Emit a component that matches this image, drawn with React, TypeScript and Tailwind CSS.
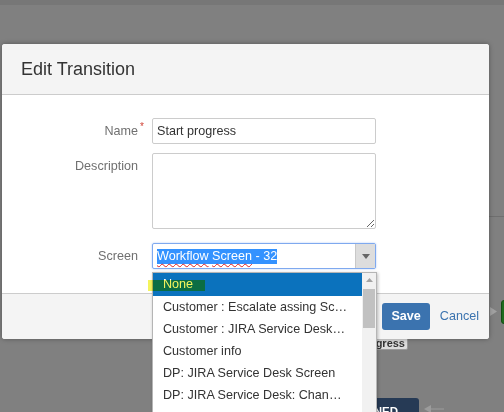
import { FC } from 'react';

const options = [
    'Customer : Escalate assing Screen',
    'Customer : JIRA Service Desk Screen',
    'Customer info',
    'DP: JIRA Service Desk Screen',
    'DP: JIRA Service Desk: Change Management Screen',
    'DP: JIRA Service Desk: Incident Screen',
];

const Label: FC<{ text: string; required?: boolean }> = ({ text, required }) => (
    <div className="relative text-right leading-[26px] text-[#707070]">
        {text}
        {required && <span className="absolute -right-[6px] -top-[4px] text-[10px] text-[#d04437]">*</span>}
    </div>
);

const App: FC = () => {
    return (
        <div className="relative h-[412px] w-[504px] overflow-hidden bg-[#808080] font-['Liberation_Sans',Arial,sans-serif] text-[12.6px] text-[#333]">
            <div className="h-[5px] bg-[#777777]" />

            {/* workflow canvas behind the dialog */}
            <div className="absolute left-[480px] top-[216px] h-px w-[24px] bg-[#6f6f6f]" />
            <svg className="absolute left-[490px] top-[307px]" width="8" height="9" viewBox="0 0 8 9">
                <path d="M0 0 L7 4.5 L0 9 Z" fill="#a2a2a2" />
            </svg>
            <div className="absolute left-[501px] top-[300px] h-[24px] w-[12px] rounded-[3px] border border-[#134d13] bg-[#1e6b1e]" />
            <div className="absolute right-[96px] top-[336px] flex h-[14px] items-center rounded-[2px] border border-[#9a9a9a] bg-[#dcdcdc] px-[2px] text-[11px] font-bold leading-none text-[#333]">
                Start progress
            </div>
            <div className="absolute right-[85px] top-[398px] h-[24px] rounded-[3px] bg-[#263a55] pl-[20px] pr-[21px] pt-[8px] text-[11.5px] font-bold leading-none text-white">
                ASSIGNED
            </div>
            <svg className="absolute left-[424px] top-[405px]" width="20" height="8" viewBox="0 0 20 8">
                <path d="M0 4 L7 0 L7 8 Z" fill="#9c9c9c" />
                <path d="M7 4 H20" stroke="#9c9c9c" strokeWidth="1" />
            </svg>

            {/* dialog */}
            <div className="absolute left-[2px] top-[44px] flex w-[487px] flex-col overflow-hidden rounded-[3px] bg-white shadow-[0_0_5px_rgba(0,0,0,0.35)]">
                <div className="flex h-[51px] items-center border-b border-[#cccccc] bg-[#f4f4f4] px-[19px]">
                    <h2 className="text-[18px] font-normal text-[#333]">Edit Transition</h2>
                </div>

                <div className="h-[198px] pt-[23px]">
                    <div className="grid grid-cols-[136px_224px] gap-x-[14px]">
                        <Label text="Name" required />
                        <input
                            className="h-[26px] rounded-[2px] border border-[#cccccc] px-[4px] text-[12.6px] text-[#333] outline-none"
                            defaultValue="Start progress"
                        />

                        <div className="mt-[9px]">
                            <Label text="Description" />
                        </div>
                        <textarea className="mt-[9px] h-[76px] rounded-[2px] border border-[#cccccc] px-[4px] text-[12.6px] outline-none" />

                        <div className="mt-[14px]">
                            <Label text="Screen" />
                        </div>
                        <div className="mt-[14px] flex h-[26px] items-stretch rounded-[2px] border border-[#7fa9ef] shadow-[0_0_2px_#a9c7f7]">
                            <div className="flex flex-1 items-center pl-[4px]">
                                <span className="bg-[#3392ff] leading-[15px] text-white">
                                    <span className="underline decoration-[#e02020] decoration-wavy decoration-1 underline-offset-[3px]">Workflow</span>{' '}
                                    <span className="underline decoration-[#e02020] decoration-wavy decoration-1 underline-offset-[3px]">Screen</span> - 32
                                </span>
                            </div>
                            <div className="flex w-[20px] items-center justify-center border-l border-[#c8c8c8] bg-[#dddddd]">
                                <svg width="8" height="5" viewBox="0 0 8 5">
                                    <path d="M0 0 H8 L4 5 Z" fill="#666" />
                                </svg>
                            </div>
                        </div>
                    </div>
                </div>

                <div className="flex h-[46px] items-center justify-end gap-[10px] border-t border-[#cccccc] bg-[#f4f4f4] pr-[10px]">
                    <button className="h-[27px] rounded-[3px] bg-[#3b73af] px-[9px] text-[12.6px] font-bold text-white">Save</button>
                    <a className="text-[12.6px] text-[#3b73af]">Cancel</a>
                </div>
            </div>

            {/* open select list */}
            <div className="absolute left-[152px] top-[272px] flex h-[150px] w-[225px] border border-[#b5b5b5] bg-white shadow-[1px_1px_3px_rgba(0,0,0,0.25)]">
                <div className="min-w-0 flex-1">
                    <div className="h-[23px] bg-[#0b72bd] pl-[10px] leading-[23px] text-white">None</div>
                    {options.map((o) => (
                        <div key={o} className="h-[22px] truncate pl-[10px] pr-[14px] leading-[22px] text-[#333]">
                            {o}
                        </div>
                    ))}
                </div>
                <div className="flex w-[14px] flex-col items-center bg-[#f1f1f1]">
                    <svg className="mt-[5px]" width="7" height="4" viewBox="0 0 7 4">
                        <path d="M0 4 L3.5 0 L7 4 Z" fill="#a3a3a3" />
                    </svg>
                    <div className="mt-[7px] h-[39px] w-[12px] bg-[#c1c1c1]" />
                </div>
            </div>

            {/* marker highlight over "None" */}
            <div className="absolute left-[148px] top-[280px] h-[11px] w-[57px] bg-[#f4f45c] mix-blend-multiply" />
        </div>
    );
};

export default App;
